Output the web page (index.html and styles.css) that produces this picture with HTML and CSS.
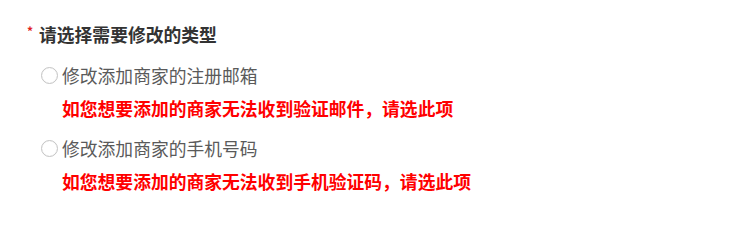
FILE: index.html
```html
<!doctype html>
<html>

<head>
  <title>修改类型</title>
  <link rel="stylesheet" href="styles.css">
</head>

<body>
  <form class="type-form">
    <div class="field-label"><span class="required">*</span>请选择需要修改的类型</div>
    <div class="options">
      <label class="option">
        <span class="radio"></span>
        <span class="option-text">修改添加商家的注册邮箱</span>
      </label>
      <p class="hint">如您想要添加的商家无法收到验证邮件，请选此项</p>
      <label class="option">
        <span class="radio"></span>
        <span class="option-text">修改添加商家的手机号码</span>
      </label>
      <p class="hint">如您想要添加的商家无法收到手机验证码，请选此项</p>
    </div>
  </form>
</body>

</html>
```

FILE: styles.css
```css
* {
  box-sizing: border-box;
  margin: 0;
  padding: 0;
}

html {
  font-family: "Noto Sans CJK SC", "Noto Sans", sans-serif;
  background: #fff;
  color: #333;
}

body {
  width: 732px;
  height: 244px;
  overflow: hidden;
}

.type-form {
  padding: 22px 0 0 27px;
}

.field-label {
  display: flex;
  align-items: center;
  font-size: 17.8px;
  font-weight: bold;
  line-height: 24px;
  color: #333;
}

.required {
  color: #e02020;
  font-size: 12px;
  width: 12px;
  align-self: flex-start;
  line-height: 18px;
}

.options {
  display: flex;
  flex-direction: column;
  padding: 17px 0 0 14px;
}

.option {
  display: flex;
  align-items: center;
  gap: 4px;
  height: 24px;
}

.radio {
  width: 17px;
  height: 17px;
  border-radius: 50%;
  border: 1px solid #c4c4c4;
  box-shadow: inset 0 0 1px rgba(0, 0, 0, 0.1);
  background: #fff;
}

.option-text {
  font-size: 17.8px;
  line-height: 24px;
  color: #5a5a5a;
}

.hint {
  font-size: 17.8px;
  line-height: 24px;
  font-weight: bold;
  color: #f00;
  padding: 9px 0 16px 21px;
}
```
